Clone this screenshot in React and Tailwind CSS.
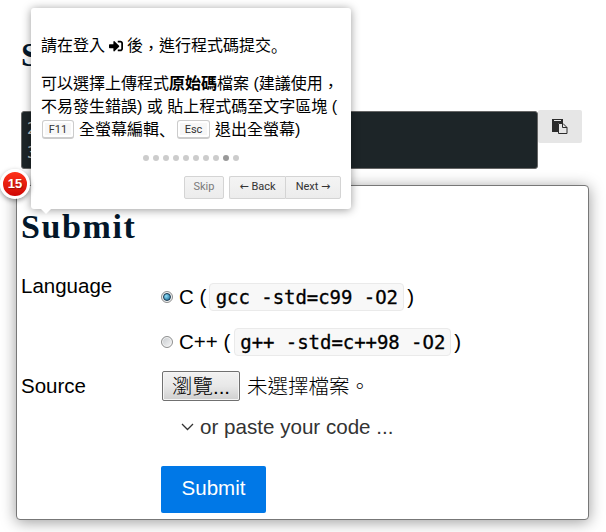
import React from 'react';
import { FaSignInAlt } from 'react-icons/fa';

const dots = [0, 1, 2, 3, 4, 5, 6, 7, 8, 9];

function Comma() {
  return <span className="relative top-[3px]">，</span>;
}

function Key({ children, className }) {
  return (
    <kbd className={`inline-flex h-[19px] shrink-0 items-center justify-center rounded-[3px] border border-b-2 border-[#ccc] bg-[#f7f7f7] font-['Roboto',sans-serif] text-[11px] text-[#333] shadow-[inset_0_0_0_2px_#fff] ${className}`}>
      {children}
    </kbd>
  );
}

function Code({ children, className }) {
  return (
    <code className={`flex h-[28px] items-center justify-center rounded-[4px] border border-[#eaeaea] bg-[#f8f8f8] whitespace-pre font-['DejaVu_Sans_Mono',monospace] text-[19px] tracking-[-0.05px] [-webkit-text-stroke:0.3px_black] ${className}`}>
      {children}
    </code>
  );
}

function Radio({ checked }) {
  return (
    <span className="mr-[6px] flex size-[12px] shrink-0 items-center justify-center rounded-full border border-[#8e8f8f] bg-linear-to-br from-[#c5c9cd] to-[#f8f8f8] shadow-[inset_0_0_0_1px_#f4f4f4]">
      {checked && <span className="size-[8px] rounded-full border border-[#17384f] bg-radial-[at_35%_35%] from-[#8fe0fa] to-[#125f8c]" />}
    </span>
  );
}

function PasteIcon() {
  return (
    <svg width="16" height="16" viewBox="0 0 16 16">
      <path d="M0 0H11V4H6V13H0Z" fill="#2b2b2b" />
      <path d="M2 1.5H9" stroke="#e6e6e6" />
      <path d="M6.5 4.5H11L15 8.5V14.5H6.5Z" fill="#e6e6e6" stroke="#2b2b2b" />
      <path d="M10.5 4.5V8.5H15" fill="none" stroke="#2b2b2b" />
    </svg>
  );
}

function Tooltip() {
  return (
    <div className="absolute left-[31px] top-[8px] h-[201px] w-[320px] rounded-[3px] bg-white p-[10px] font-['Liberation_Sans','Noto_Sans_CJK_TC',sans-serif] text-[16px] leading-[23px] text-black shadow-[0_1px_10px_rgba(0,0,0,0.4)]">
      <p className="mt-[16px] flex items-center whitespace-nowrap">
        請在登入<FaSignInAlt className="mx-[4px] size-[14px]" />後<Comma />進行程式碼提交<span className="font-['Noto_Sans_CJK_JP',sans-serif]">。</span>
      </p>
      <div className="mt-[15px] whitespace-nowrap">
        <p>可以選擇上傳程式<b>原始碼</b>檔案 (建議使用<Comma /></p>
        <p>不易發生錯誤) 或 貼上程式碼至文字區塊 (</p>
        <p className="flex items-center">
          <Key className="ml-[1px] mr-[5px] w-[32px]">F11</Key>
          全螢幕編輯<span className="w-[18px] font-['Noto_Sans_CJK_JP',sans-serif]">、</span>
          <Key className="mr-[5px] w-[33px]">Esc</Key>
          退出全螢幕)
        </p>
      </div>
      <div className="mt-[14px] flex h-[6px] justify-center gap-[4px]">
        {dots.map((n) => (
          <span key={n} className={`size-[6px] rounded-full ${n === 8 ? 'bg-[#999]' : 'bg-[#ccc]'}`} />
        ))}
      </div>
      <div className="mt-[15px] flex h-[23px] justify-end font-['Roboto','DejaVu_Sans',sans-serif] text-[11px] leading-[20px] text-[#333]">
        <button className="mr-[5px] w-[40px] rounded-[2px] border border-[#d4d4d4] bg-linear-to-b from-[#f4f4f4] to-[#ececec] pb-[2px] text-[#7a7a7a]">Skip</button>
        <button className="w-[56px] rounded-l-[2px] border border-r-0 border-[#d4d4d4] bg-linear-to-b from-[#f4f4f4] to-[#ececec] pb-[2px] whitespace-nowrap">← Back</button>
        <button className="w-[56px] rounded-r-[2px] border border-[#d4d4d4] bg-linear-to-b from-[#f4f4f4] to-[#ececec] pb-[2px] whitespace-nowrap">Next →</button>
      </div>
      <span className="absolute left-[10px] top-full border-x-5 border-t-5 border-x-transparent border-t-white" />
    </div>
  );
}

export default function App() {
  return (
    <div className="relative h-[532px] w-[606px] overflow-hidden bg-white font-['Liberation_Sans','Noto_Sans_CJK_TC',sans-serif] text-[20.5px] text-black">
      <div className="flex h-[185px] flex-col pl-[21px]">
        <h1 className="mt-[32px] h-[78px] font-['Liberation_Serif',serif] text-[33px] leading-[46px] font-bold text-[#03172a]">S</h1>
        <div className="flex items-start">
          <pre className="mt-[1px] h-[58px] w-[517px] rounded-[3px] border border-[#666] bg-[#1d2528] px-[5px] pt-[5px] font-['DejaVu_Sans_Mono',monospace] text-[16px] leading-[24px] text-[#c5c8c6]">{'2\n3'}</pre>
          <button className="flex h-[33px] w-[44px] items-center justify-center rounded-[2px] bg-[#e6e6e6]">
            <PasteIcon />
          </button>
        </div>
      </div>
      <section className="relative ml-[16px] h-[335px] w-[573px] rounded-[4px] border border-[#777] bg-white pl-[4px] shadow-[0_2px_15px_rgba(0,0,0,0.4)]">
        <h2 className="mt-[18px] h-[46px] font-['Liberation_Serif',serif] text-[34px] leading-[46px] font-bold tracking-[1.6px] text-[#03172a]">Submit</h2>
        <div className="mt-[24px] flex">
          <span className="w-[140px] leading-[24px]">Language</span>
          <div className="mt-[9px] flex flex-col gap-[17px]">
            <div className="flex h-[28px] items-center">
              <Radio checked />C (<Code className="ml-[3px] mr-[3px] w-[195px]">gcc -std=c99 -O2</Code>)
            </div>
            <div className="flex h-[28px] items-center">
              <Radio />C++ (<Code className="ml-[4px] mr-[3px] w-[217px]">g++ -std=c++98 -O2</Code>)
            </div>
          </div>
        </div>
        <div className="mt-[15px] flex h-[30px] items-center">
          <span className="w-[141px]">Source</span>
          <button className="h-[30px] w-[78px] rounded-[2px] border border-[#707070] bg-linear-to-b from-[#f2f2f2] via-[#e8e8e8] via-50% to-[#cfcfcf] pt-[2px] font-light leading-[26px] shadow-[inset_0_0_0_1px_#f5f5f5]">瀏覽...</button>
          <span className="ml-[7px] pt-[2px] font-light">未選擇檔案。</span>
        </div>
        <div className="ml-[160px] mt-[14px] flex h-[24px] items-center text-[#333]">
          <svg width="13" height="8" viewBox="0 0 13 8" className="mr-[6px]">
            <path d="M1 1L6.5 6.5L12 1" fill="none" stroke="#333" strokeWidth="1.3" />
          </svg>
          <span className="text-[20.6px]">or paste your code ...</span>
        </div>
        <button className="ml-[140px] mt-[27px] h-[47px] w-[105px] rounded-[2px] bg-[#0078e7] pb-[2px] text-white">Submit</button>
      </section>
      <Tooltip />
      <span className="absolute left-0 top-[169px] flex size-[30px] items-center justify-center rounded-full border-3 border-white bg-linear-to-b from-[#ff3019] to-[#cf0404] pb-[1px] text-[13px] font-bold text-white shadow-[0_2px_5px_rgba(0,0,0,0.4)] text-shadow-[1px_1px_1px_rgba(0,0,0,0.3)]">15</span>
    </div>
  );
}
